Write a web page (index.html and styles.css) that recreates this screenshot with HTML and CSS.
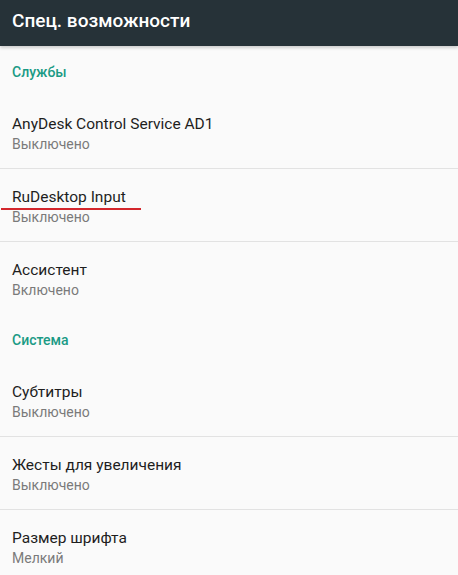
FILE: index.html
```html
<!DOCTYPE html>
<html lang="ru">
<head>
  <meta charset="UTF-8">
  <title>Спец. возможности</title>
  <link rel="stylesheet" href="styles.css">
</head>
<body>

  <header class="toolbar">
    <h1>Спец. возможности</h1>
  </header>

  <main class="prefs">
    <div class="category">Службы</div>

    <div class="pref">
      <div class="pref-title">AnyDesk Control Service AD1</div>
      <div class="pref-summary">Выключено</div>
    </div>
    <div class="pref">
      <div class="pref-title marked">RuDesktop Input</div>
      <div class="pref-summary">Выключено</div>
    </div>
    <div class="pref last">
      <div class="pref-title">Ассистент</div>
      <div class="pref-summary">Включено</div>
    </div>

    <div class="category">Система</div>

    <div class="pref">
      <div class="pref-title">Субтитры</div>
      <div class="pref-summary">Выключено</div>
    </div>
    <div class="pref">
      <div class="pref-title">Жесты для увеличения</div>
      <div class="pref-summary">Выключено</div>
    </div>
    <div class="pref">
      <div class="pref-title">Размер шрифта</div>
      <div class="pref-summary">Мелкий</div>
    </div>
  </main>

</body>
</html>
```

FILE: styles.css
```css
* {
  margin: 0;
  padding: 0;
  box-sizing: border-box;
}

body {
  font-family: Roboto, 'Noto Sans', sans-serif;
  background-color: #fafafa;
  color: #212121;
  overflow: hidden;
}

.toolbar {
  height: 46px;
  background-color: #263238;
  padding: 0 12px;
  display: flex;
  align-items: center;
  box-shadow: 0 2px 3px rgba(0, 0, 0, 0.18);
  position: relative;
  z-index: 1;
}

.toolbar h1 {
  font-size: 19px;
  font-weight: 500;
  color: #fff;
  padding-bottom: 5px;
}

.category {
  font-size: 14px;
  line-height: 20px;
  font-weight: 500;
  color: #1b9a85;
  padding: 16px 12px 14px;
}

.pref {
  padding: 18px 12px 14px;
  border-bottom: 1px solid #e2e2e2;
}

.pref.last {
  border-bottom: none;
}

.pref-title {
  font-size: 15.5px;
  line-height: 20px;
  color: #1e1e1e;
}

.pref-summary {
  font-size: 14px;
  line-height: 20px;
  color: #7a7a7a;
}

/* красная отметка под пунктом */
.marked {
  position: relative;
}

.marked::after {
  content: '';
  position: absolute;
  left: -11px;
  top: 21px;
  width: 140px;
  height: 2px;
  background-color: #d3262c;
}
```
